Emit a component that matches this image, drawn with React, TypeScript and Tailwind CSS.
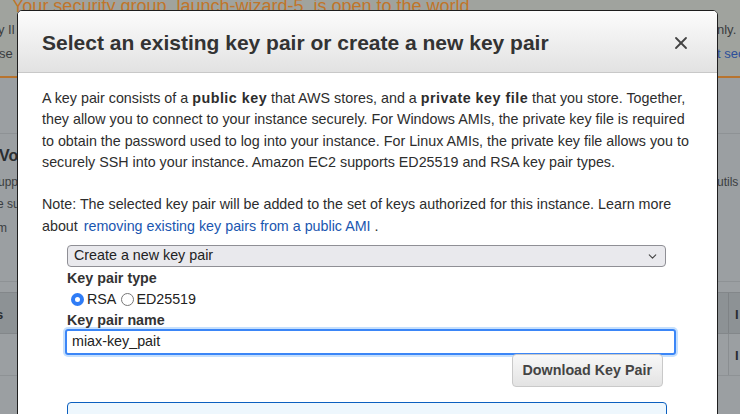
import { X, ChevronDown } from "lucide-react";

const font = "font-['Liberation_Sans',Arial,sans-serif]";

const BackgroundPage = () => (
    <div className="absolute inset-0 flex flex-col overflow-hidden bg-[#9b9fa2]">
        {/* warning banner */}
        <div className="relative h-[78px] shrink-0 bg-[#a0a39e] border-b-2 border-[#b8742e]">
            <div className="absolute left-[12px] top-[-7px] text-[18px] text-[#c0752a] whitespace-nowrap">
                Your security group, launch-wizard-5, is open to the world.
            </div>
            <div className="absolute left-[-2px] top-[20px] text-[13px] text-[#3a3d40]">y Il</div>
            <div className="absolute left-[-1px] top-[44px] text-[13px] text-[#3a3d40]">se</div>
            <div className="absolute left-[717px] top-[20px] text-[13px] text-[#3a3d40] whitespace-nowrap">nly.</div>
            <div className="absolute left-[717px] top-[44px] text-[13px] text-[#2c4f9a] whitespace-nowrap">t sec</div>
        </div>
        <div className="h-[56px] shrink-0 border-b border-[#8e9295]" />
        <div className="relative h-[148px] shrink-0 border-b border-[#8e9295]">
            <div className="absolute left-[-1px] top-[10px] text-[16px] font-bold text-[#2a2d30]">Vo</div>
            <div className="absolute left-[-2px] top-[39px] text-[12px] text-[#3a3d40]">upp</div>
            <div className="absolute left-[-3px] top-[61px] text-[12px] text-[#3a3d40]">e su</div>
            <div className="absolute left-[-3px] top-[85px] text-[12px] text-[#3a3d40]">m</div>
            <div className="absolute left-[717px] top-[39px] text-[12px] text-[#3a3d40]">utils</div>
        </div>
        <div className="h-[10px] shrink-0" />
        <div className="relative h-[42px] shrink-0 bg-[#8d9295] border-y border-[#83878a] flex">
            <div className="absolute left-[-4px] top-[12px] text-[13px] font-bold text-[#2a2d30]">s</div>
            <div className="ml-[728px] w-px h-full bg-[#7f8386]" />
            <div className="absolute left-[735px] top-[12px] text-[13px] font-bold text-[#2a2d30]">I</div>
        </div>
        <div className="relative h-[42px] shrink-0 border-b border-[#8e9295] flex">
            <div className="ml-[728px] w-px h-full bg-[#8a8e91]" />
            <div className="absolute left-[735px] top-[12px] text-[13px] font-bold text-[#2a2d30]">I</div>
        </div>
    </div>
);

export default function App() {
    return (
        <div className={`relative w-[740px] h-[414px] overflow-hidden ${font}`}>
            <BackgroundPage />

            {/* --- MODAL --- */}
            <div className="absolute left-[17px] top-[10px] w-[701px] h-[420px] bg-white border border-[#1e1e1e] rounded-t-[5px] overflow-hidden">
                <div className="h-[62px] flex items-center justify-between pl-[24px] pr-[26px] pt-[3px] bg-gradient-to-b from-[#fcfcfc] to-[#e2e2e2] border-b border-[#c8c8c8]">
                    <h1 className="text-[21px] font-bold text-[#333]">
                        Select an existing key pair or create a new key pair
                    </h1>
                    <X size={20} strokeWidth={2.2} className="text-[#444]" />
                </div>

                <div className="pl-[24px] pr-[12px] pt-[15px] text-[14.3px] leading-[21.3px] text-[#2d2d2d]">
                    <p>
                        <span className="block whitespace-nowrap">
                            A key pair consists of a <b className="tracking-[0.5px]">public key</b> that AWS stores, and a <b className="tracking-[0.5px]">private key file</b> that you store. Together,
                        </span>
                        <span className="block whitespace-nowrap">
                            they allow you to connect to your instance securely. For Windows AMIs, the private key file is required
                        </span>
                        <span className="block whitespace-nowrap">
                            to obtain the password used to log into your instance. For Linux AMIs, the private key file allows you to
                        </span>
                        <span className="block whitespace-nowrap">
                            securely SSH into your instance. Amazon EC2 supports ED25519 and RSA key pair types.
                        </span>
                    </p>
                    <p className="mt-[21.3px]">
                        <span className="block whitespace-nowrap">
                            Note: The selected key pair will be added to the set of keys authorized for this instance. Learn more
                        </span>
                        <span className="block whitespace-nowrap">
                            about <span className="text-[#1a56b0] ml-[2px]">removing existing key pairs from a public AMI</span> .
                        </span>
                    </p>

                    {/* FORM */}
                    <div className="ml-[25px] mt-[8px] w-[611px]">
                        <div className="w-[599px] h-[22px] flex items-center justify-between pl-[6px] pr-[6px] bg-[#e9e9ed] border border-[#8f8f95] rounded-[4px] text-[#222]">
                            <span>Create a new key pair</span>
                            <ChevronDown size={13} strokeWidth={2} className="text-[#444]" />
                        </div>
                        <div className="mt-[1px] font-bold text-[#333]">Key pair type</div>
                        <div className="flex items-center h-[21px] text-[#222]">
                            <span className="ml-[4px] w-[13px] h-[13px] rounded-full border-[4px] border-[#2f7cf6] bg-white" />
                            <span className="ml-[3px]">RSA</span>
                            <span className="ml-[5px] w-[13px] h-[13px] rounded-full border border-[#777] bg-white" />
                            <span className="ml-[2px]">ED25519</span>
                        </div>
                        <div className="font-bold text-[#333]">Key pair name</div>
                        <div className="-ml-[2px] mt-[-3px] w-[611px] h-[26px] flex items-center pl-[5px] border-2 border-[#3b86f7] rounded-[3px] shadow-[0_0_0_2px_#c6e0fd] text-[#222]">
                            miax-key_pait
                        </div>
                        <div className="flex justify-end w-[596px] mt-[-1px]">
                            <button className={`h-[33px] px-[10px] font-bold text-[#444] bg-gradient-to-b from-[#f8f8f8] to-[#e3e3e3] border border-[#c9c9c9] rounded-[4px] ${font}`}>
                                Download Key Pair
                            </button>
                        </div>
                        <div className="mt-[15px] w-[600px] h-[40px] border border-[#0b5fbf] bg-[#eef7fd] rounded-[4px]" />
                    </div>
                </div>
            </div>
        </div>
    );
}
